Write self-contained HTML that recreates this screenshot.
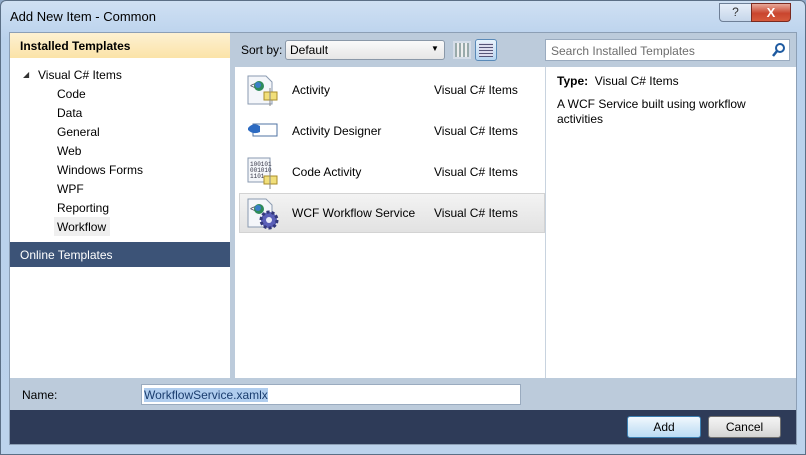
<!DOCTYPE html>
<html><head><meta charset="utf-8"><style>
*{margin:0;padding:0;box-sizing:border-box}
body{width:806px;height:455px;overflow:hidden;background:#8fa9c8;font-family:"Liberation Sans",sans-serif;font-size:12px;color:#000;position:relative}
.a{position:absolute}
.frame{left:0;top:0;width:806px;height:455px;background:linear-gradient(#cfe0f3,#b9d1ec 40px,#bcd3ec);border:1px solid #5b6f86;border-radius:6px 6px 0 0}
.title{left:10px;top:9px;font-size:13px;color:#000}
.t{position:absolute;white-space:nowrap}
</style></head><body>
<div class="a frame"></div>
<div class="a title">Add New Item - Common</div>
<!-- caption buttons -->
<div class="a" style="left:719px;top:3px;width:33px;height:19px;border:1px solid #6e7f96;border-radius:0 0 0 4px;background:linear-gradient(#e6eef8,#c6d6ea);text-align:center;font-size:12px;color:#333;line-height:17px">?</div>
<div class="a" style="left:751px;top:3px;width:40px;height:19px;border:1px solid #7a2a20;border-radius:0 0 4px 0;background:linear-gradient(#e8a99a,#c9452e 55%,#d65a3c);text-align:center;color:#fff;font-weight:bold;font-size:13px;line-height:17px">X</div>
<!-- content area -->
<div class="a" style="left:9px;top:32px;width:788px;height:413px;background:#bccbdb;border:1px solid #8c9fb5"></div>
<!-- left panel -->
<div class="a" style="left:10px;top:33px;width:220px;height:345px;background:#fff"></div>
<div class="a" style="left:10px;top:33px;width:220px;height:25px;background:linear-gradient(#fdf1d2,#fbe3a8)"></div>
<div class="t" style="left:20px;top:39px;font-weight:bold">Installed Templates</div>
<div class="t" style="left:23px;top:70px;font-size:8px;color:#333">◢</div>
<div class="t" style="left:38px;top:68px">Visual C# Items</div>
<div class="t" style="left:57px;top:87px">Code</div>
<div class="t" style="left:57px;top:106px">Data</div>
<div class="t" style="left:57px;top:125px">General</div>
<div class="t" style="left:57px;top:144px">Web</div>
<div class="t" style="left:57px;top:163px">Windows Forms</div>
<div class="t" style="left:57px;top:182px">WPF</div>
<div class="t" style="left:57px;top:201px">Reporting</div>
<div class="a" style="left:54px;top:217px;width:56px;height:19px;background:#efefef"></div>
<div class="t" style="left:57px;top:220px">Workflow</div>
<div class="a" style="left:10px;top:242px;width:220px;height:25px;background:#3c5377"></div>
<div class="t" style="left:20px;top:248px;color:#fff">Online Templates</div>
<!-- toolbar -->
<div class="t" style="left:241px;top:43px">Sort by:</div>
<div class="a" style="left:285px;top:40px;width:160px;height:20px;border:1px solid #8a98a8;border-radius:3px;background:linear-gradient(#fafafa,#e6e6e6)"></div>
<div class="t" style="left:290px;top:43px">Default</div>
<div class="t" style="left:431px;top:44px;font-size:8px">▼</div>
<div class="a" style="left:453px;top:41px;width:18px;height:18px;background:repeating-linear-gradient(90deg,#9aa 0 2px,#eee 2px 4px);border:2px solid #d5dde8"></div>
<div class="a" style="left:475px;top:39px;width:22px;height:22px;border:1px solid #5a8ab8;border-radius:3px;background:linear-gradient(#e8f3fc,#b7d5f0)"></div>
<div class="a" style="left:479px;top:43px;width:14px;height:14px;background:repeating-linear-gradient(0deg,#557 0 1px,#dde 1px 3px)"></div>
<div class="a" style="left:545px;top:39px;width:245px;height:22px;background:#fff;border:1px solid #9aabbf"></div>
<div class="t" style="left:551px;top:44px;color:#6d6d6d">Search Installed Templates</div>
<svg class="a" style="left:771px;top:42px" width="16" height="16"><circle cx="9" cy="6" r="4" fill="none" stroke="#1e5aa0" stroke-width="2"/><line x1="6" y1="9" x2="2" y2="14" stroke="#1e5aa0" stroke-width="2.5"/></svg>
<!-- middle list -->
<div class="a" style="left:235px;top:67px;width:310px;height:311px;background:#fff"></div>
<div class="a" style="left:239px;top:193px;width:306px;height:40px;background:linear-gradient(#f3f3f3,#e2e2e2);border:1px solid #d3d3d3"></div>
<!-- icons -->
<svg class="a" style="left:246px;top:74px" width="34" height="34"><path d="M2 2h18l6 6v22H2z" fill="#f4f6fa" stroke="#8a9ab0"/><text x="4" y="15" font-size="10" fill="#445" font-family="Liberation Sans">&lt;</text><circle cx="13" cy="12" r="5" fill="#2e8a5a"/><circle cx="12" cy="11" r="3" fill="#3a7ec8"/><rect x="18" y="18" width="13" height="8" fill="#f1df7a" stroke="#a98d2a"/><line x1="24" y1="14" x2="24" y2="32" stroke="#888"/></svg>
<svg class="a" style="left:246px;top:117px" width="34" height="28"><rect x="7" y="7" width="24" height="12" fill="#fff" stroke="#4f73a3"/><path d="M2 11q5-6 12-2v6q-7 3-12-2z" fill="#2d6bc2"/></svg>
<svg class="a" style="left:246px;top:156px" width="34" height="34"><rect x="2" y="2" width="22" height="24" fill="#f4f6fa" stroke="#8a9ab0"/><text x="4" y="10" font-size="6" fill="#334" font-family="Liberation Mono">100101</text><text x="4" y="16" font-size="6" fill="#334" font-family="Liberation Mono">001010</text><text x="4" y="22" font-size="6" fill="#334" font-family="Liberation Mono">1101</text><rect x="18" y="20" width="13" height="8" fill="#f1df7a" stroke="#a98d2a"/><line x1="24" y1="16" x2="24" y2="33" stroke="#888"/></svg>
<svg class="a" style="left:246px;top:197px" width="34" height="34"><path d="M2 2h18l6 6v22H2z" fill="#f4f6fa" stroke="#8a9ab0"/><text x="4" y="15" font-size="10" fill="#445" font-family="Liberation Sans">&lt;</text><circle cx="13" cy="12" r="5" fill="#2e8a5a"/><circle cx="12" cy="11" r="3" fill="#3a7ec8"/><circle cx="23" cy="23" r="8" fill="#5a5fb8" stroke="#33387a" stroke-width="3" stroke-dasharray="3 2"/><circle cx="23" cy="23" r="3" fill="#e8eaf8"/></svg>
<div class="t" style="left:292px;top:83px">Activity</div>
<div class="t" style="left:292px;top:124px">Activity Designer</div>
<div class="t" style="left:292px;top:165px">Code Activity</div>
<div class="t" style="left:292px;top:206px">WCF Workflow Service</div>
<div class="t" style="left:434px;top:83px">Visual C# Items</div>
<div class="t" style="left:434px;top:124px">Visual C# Items</div>
<div class="t" style="left:434px;top:165px">Visual C# Items</div>
<div class="t" style="left:434px;top:206px">Visual C# Items</div>
<!-- right pane -->
<div class="a" style="left:545px;top:67px;width:251px;height:311px;background:#fff;border-left:1px solid #c8d3df"></div>
<div class="t" style="left:557px;top:74px"><b>Type:</b>&nbsp; Visual C# Items</div>
<div class="t" style="left:557px;top:97px;line-height:15px">A WCF Service built using workflow<br>activities</div>
<!-- name row -->
<div class="t" style="left:22px;top:388px">Name:</div>
<div class="a" style="left:141px;top:384px;width:380px;height:21px;background:#fff;border:1px solid #9aabbf"></div>
<div class="t" style="left:144px;top:388px;background:#b0cdee;color:#1a3d6e">WorkflowService.xamlx</div>
<!-- bottom bar -->
<div class="a" style="left:10px;top:410px;width:786px;height:34px;background:#2e3b58"></div>
<div class="a" style="left:627px;top:416px;width:74px;height:22px;border:1px solid #3c7fb1;border-radius:3px;background:linear-gradient(#f2f9fe,#d5e9f8 50%,#bcdcf4);text-align:center;line-height:20px">Add</div>
<div class="a" style="left:708px;top:416px;width:73px;height:22px;border:1px solid #707070;border-radius:3px;background:linear-gradient(#f4f4f4,#e6e6e6 50%,#d3d3d3);text-align:center;line-height:20px">Cancel</div>
</body></html>
